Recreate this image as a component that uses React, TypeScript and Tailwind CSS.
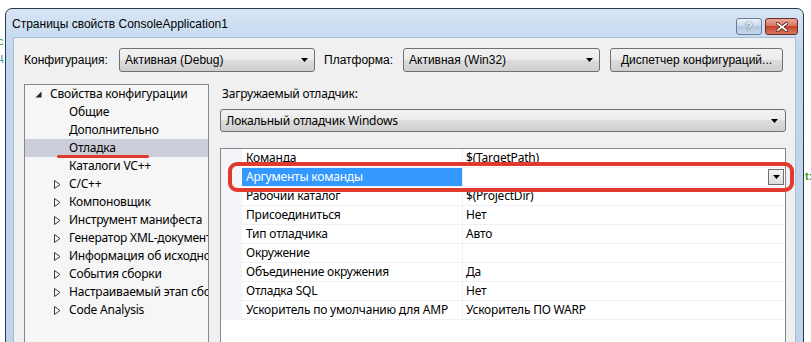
const DownArrow = () => (
  <svg width="7" height="4" viewBox="0 0 7 4" className="shrink-0">
    <path d="M0 0h7L3.5 4z" fill="#000" />
  </svg>
);

const OpenTriangle = () => (
  <svg width="7" height="9" viewBox="0 0 7 9" className="shrink-0">
    <path d="M0.5 0.5L6 4.5L0.5 8.5z" fill="none" stroke="#3c3c3c" strokeWidth="1" />
  </svg>
);

const FilledTriangle = () => (
  <svg width="7" height="7" viewBox="0 0 7 7" className="shrink-0">
    <path d="M6.5 0.5V6.5H0.5z" fill="#262626" />
  </svg>
);

/* ── Win7 style combobox ── */
function Combo({ text, className }: { text: string; className: string }) {
  return (
    <div
      className={`flex items-center rounded-[3px] border border-[#707070] bg-[linear-gradient(#f2f2f2,#ebebeb_50%,#dddddd_50%,#cfcfcf)] pl-[5px] pr-[6px] text-black ${className}`}
    >
      <span className="flex-1 truncate">{text}</span>
      <DownArrow />
    </div>
  );
}

const treeItems: { label: string; expandable: boolean; selected?: boolean }[] = [
  { label: 'Общие', expandable: false },
  { label: 'Дополнительно', expandable: false },
  { label: 'Отладка', expandable: false, selected: true },
  { label: 'Каталоги VC++', expandable: false },
  { label: 'C/C++', expandable: true },
  { label: 'Компоновщик', expandable: true },
  { label: 'Инструмент манифеста', expandable: true },
  { label: 'Генератор XML-документов', expandable: true },
  { label: 'Информация об исходном коде', expandable: true },
  { label: 'События сборки', expandable: true },
  { label: 'Настраиваемый этап сборки', expandable: true },
  { label: 'Code Analysis', expandable: true },
];

const gridRows: { name: string; value: string; selected?: boolean }[] = [
  { name: 'Команда', value: '$(TargetPath)' },
  { name: 'Аргументы команды', value: '', selected: true },
  { name: 'Рабочий каталог', value: '$(ProjectDir)' },
  { name: 'Присоединиться', value: 'Нет' },
  { name: 'Тип отладчика', value: 'Авто' },
  { name: 'Окружение', value: '' },
  { name: 'Объединение окружения', value: 'Да' },
  { name: 'Отладка SQL', value: 'Нет' },
  { name: 'Ускоритель по умолчанию для AMP', value: 'Ускоритель ПО WARP' },
];

export default function App() {
  return (
    <div className="relative h-[342px] w-[811px] overflow-hidden bg-white font-['Liberation_Sans',sans-serif] text-[12px] text-black">
      {/* editor text peeking out behind the dialog */}
      <span className="absolute left-[-2px] top-[33px] text-[11px] text-[#2b9a2b]">с</span>
      <span className="absolute left-[-3px] top-[49px] text-[11px] text-[#1a8fa0]">ц</span>
      <span className="absolute left-[805px] top-[168px] text-[11px] font-bold text-[#2b9a2b]">t:</span>

      {/* window */}
      <div className="relative z-10 ml-[5px] mt-[8px] flex h-[400px] w-[799px] flex-col rounded-t-[7px] border border-[#2f3a48] bg-[linear-gradient(#d7e5f5,#c2d7ee_40px,#bcd3ec)]">
        {/* title bar */}
        <div className="flex h-[28px] shrink-0 items-center pl-[6px] pr-[5px]">
          <span className="flex-1 pt-[2px] text-[12px] text-black">Страницы свойств ConsoleApplication1</span>
          <div className="mt-[1px] flex items-start gap-[3px] self-start pt-[8px]">
            <div className="flex h-[17px] w-[26px] items-center justify-center rounded-[3px] border border-[#6d7f96] bg-[linear-gradient(#e9f1fa,#c9d9ec_50%,#b2c8e2_50%,#c7d8ec)] text-[12px] font-bold leading-none text-[#f4f8fc] [text-shadow:0_0_1px_#394d66,0_0_1px_#394d66]">
              ?
            </div>
            <div className="flex h-[17px] w-[33px] items-center justify-center rounded-[3px] border border-[#6b2a22] bg-[linear-gradient(#e9a99c,#d7705c_50%,#c7432c_50%,#d5785f)]">
              <svg width="12" height="10" viewBox="0 0 12 10">
                <path d="M1.5 1.5L10.5 8.5M10.5 1.5L1.5 8.5" stroke="#4a1a12" strokeWidth="3.2" strokeLinecap="square" />
                <path d="M1.5 1.5L10.5 8.5M10.5 1.5L1.5 8.5" stroke="#ffffff" strokeWidth="1.6" strokeLinecap="square" />
              </svg>
            </div>
          </div>
        </div>

        {/* client area */}
        <div className="mx-[7px] flex flex-1 flex-col border-l border-r border-t border-[#a9bdd6] bg-[#f0f0f0]">
          {/* top row */}
          <div className="mt-[10px] flex h-[24px] items-center pl-[10px]">
            <span className="w-[95px]">Конфигурация:</span>
            <Combo text="Активная (Debug)" className="h-[24px] w-[196px]" />
            <span className="ml-[9px] w-[79px]">Платформа:</span>
            <Combo text="Активная (Win32)" className="h-[24px] w-[197px]" />
            <div className="ml-[10px] flex h-[24px] w-[173px] items-center justify-center rounded-[3px] border border-[#707070] bg-[linear-gradient(#f2f2f2,#ebebeb_50%,#dddddd_50%,#cfcfcf)]">
              Диспетчер конфигураций...
            </div>
          </div>

          {/* body */}
          <div className="mt-[12px] flex flex-1 gap-[11px] pl-[10px] font-['Noto_Sans',sans-serif] text-[12px] tracking-[-0.2px]">
            {/* tree */}
            <div className="flex w-[185px] shrink-0 flex-col overflow-hidden border border-[#828790] bg-[#f6f6f6]">
              <div className="flex h-[18px] items-center pl-[10px]">
                <FilledTriangle />
                <span className="ml-[8px] whitespace-nowrap">Свойства конфигурации</span>
              </div>
              {treeItems.map((item) => (
                <div
                  key={item.label}
                  className={`flex h-[18px] items-center pl-[29px] ${item.selected ? 'bg-[#ccceda]' : ''}`}
                >
                  <span className="flex w-[15px] shrink-0">{item.expandable && <OpenTriangle />}</span>
                  <span className="whitespace-nowrap">{item.label}</span>
                </div>
              ))}
            </div>

            {/* right pane */}
            <div className="flex w-[566px] flex-col">
              <div className="flex h-[20px] items-center pl-[2px]">Загружаемый отладчик:</div>
              <Combo text="Локальный отладчик Windows" className="mt-[5px] h-[23px] w-[566px] pr-[7px]" />

              {/* property grid */}
              <div className="mt-[16px] flex-1 border border-[#828790] bg-white">
                {gridRows.map((row) => (
                  <div key={row.name} className="flex h-[19px]">
                    <div className="w-[21px] shrink-0 bg-[#f3f5f8]" />
                    <div
                      className={`flex w-[221px] shrink-0 items-center border-b border-r border-[#eef0f4] pl-[4px] ${row.selected ? 'bg-[#3399ff] text-white' : ''}`}
                    >
                      {row.name}
                    </div>
                    <div className="flex flex-1 items-center border-b border-[#eef0f4] pl-[3px] whitespace-nowrap">
                      <span className="flex-1">{row.value}</span>
                      {row.selected && (
                        <div className="mr-[1px] flex h-[16px] w-[16px] items-center justify-center border border-[#707070] bg-[linear-gradient(#f4f4f4,#dcdcdc)]">
                          <DownArrow />
                        </div>
                      )}
                    </div>
                  </div>
                ))}
              </div>
            </div>
          </div>
        </div>
      </div>

      {/* red annotations */}
      <div className="absolute left-[228px] top-[162px] z-20 h-[30px] w-[566px] rounded-[9px] border-[4px] border-[#e2392e]" />
      <div className="absolute left-[57px] top-[155px] z-20 h-[3px] w-[92px] rounded-full bg-[#e2392e]" />
    </div>
  );
}
